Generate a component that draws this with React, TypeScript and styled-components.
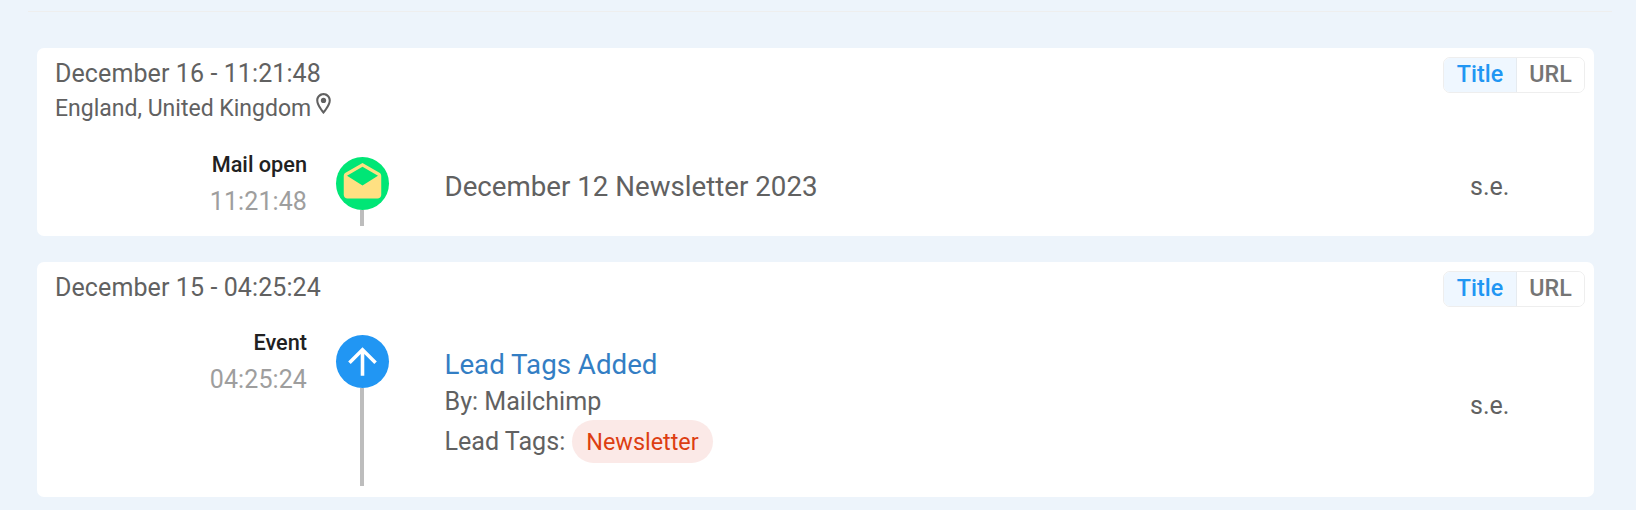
import React from 'react';
import styled, { createGlobalStyle } from 'styled-components';
import { MdArrowUpward, MdDrafts, MdOutlineLocationOn } from 'react-icons/md';

const GlobalStyle = createGlobalStyle`
  * { box-sizing: border-box; }
  body {
    margin: 0;
    background: #edf4fb;
    font-family: Roboto, 'Liberation Sans', sans-serif;
    color: #616161;
  }
`;

const Page = styled.main`
  height: 510px;
  padding: 11px 24px 0 28px;
  overflow: hidden;
`;

const Rule = styled.hr`
  height: 1px;
  margin: 0;
  border: 0;
  background: #eeeeee;
`;

const Feed = styled.div`
  display: flex;
  flex-direction: column;
  gap: 26px;
  padding: 36px 18px 0 9px;
`;

const Card = styled.section`
  padding-bottom: 10px;
  border-radius: 7px;
  background: #ffffff;

  &:last-child {
    padding-bottom: 11px;
  }
`;

const CardHeader = styled.header`
  display: flex;
  justify-content: space-between;
  align-items: flex-start;
  padding: 9px 9px 32px 18px;
`;

const Session = styled.div`
  padding-top: 2px;
`;

const DateLine = styled.div`
  font-size: 25px;
  letter-spacing: 0.1px;
  line-height: 30px;
`;

const Place = styled.div`
  display: flex;
  height: 36px;
  padding-top: 2px;
  font-size: 23px;
  line-height: 36px;
`;

const Pin = styled(MdOutlineLocationOn)`
  width: 25px;
  height: 25px;
`;

const Toggle = styled.div`
  display: flex;
  height: 36px;
  margin-bottom: -4px;
  border: 1px solid #eeeeee;
  border-radius: 7px;
  overflow: hidden;
`;

const ToggleButton = styled.button<{ $active?: boolean }>`
  width: ${(p) => (p.$active ? 73 : 67)}px;
  padding: 0 0 2px;
  border: 0;
  border-right: ${(p) => (p.$active ? '1px solid #e6ebf0' : '0')};
  background: ${(p) => (p.$active ? '#eff7ff' : '#ffffff')};
  color: ${(p) => (p.$active ? '#2196f3' : '#757575')};
  font: 500 23.3px/32px Roboto, sans-serif;
`;

const Row = styled.div<{ $height: number }>`
  display: grid;
  grid-template-columns: 270px 29px 53px 55.5px 1fr 124px;
  height: ${(p) => p.$height}px;
`;

const Label = styled.div`
  margin-top: -4px;
  text-align: right;
`;

const Kind = styled.div`
  color: #212121;
  font-size: 21.7px;
  font-weight: 500;
  line-height: 24px;
`;

const Time = styled.div`
  margin-top: 7px;
  color: #9e9e9e;
  font-size: 25px;
  letter-spacing: 0.1px;
  line-height: 36px;
`;

const Rail = styled.div`
  grid-column: 3;
  display: flex;
  flex-direction: column;
`;

const Bubble = styled.div<{ $bg: string; $fg: string }>`
  display: flex;
  align-items: center;
  justify-content: center;
  width: 53px;
  height: 53px;
  border-radius: 50%;
  background: ${(p) => p.$bg};
  color: ${(p) => p.$fg};
`;

const Stem = styled.div`
  flex: 1;
  width: 4px;
  margin-left: 24px;
  background: #bdbdbd;
`;

const Body = styled.div`
  grid-column: 5;
  padding-top: 12px;
`;

const Heading = styled.div<{ $link?: boolean }>`
  color: ${(p) => (p.$link ? '#337ec4' : 'inherit')};
  font-size: 27.7px;
  line-height: 36px;
`;

const Detail = styled.div`
  display: flex;
  align-items: center;
  gap: 7px;
  font-size: 25.1px;
  line-height: 37px;
`;

const Tag = styled.span`
  height: 43px;
  padding: 0 14px;
  border-radius: 22px;
  background: #fbe9e7;
  color: #dd3e12;
  font-size: 23.4px;
  line-height: 44px;
`;

const Duration = styled.div`
  display: flex;
  align-items: center;
  padding-bottom: 10px;
  font-size: 25px;
`;

type EntryProps = {
  date: string;
  place?: string;
  kind: string;
  time: string;
  height: number;
  bubble: { bg: string; fg: string; icon: React.ReactNode };
  children: React.ReactNode;
};

function Entry({ date, place, kind, time, height, bubble, children }: EntryProps) {
  return (
    <Card>
      <CardHeader>
        <Session>
          <DateLine>{date}</DateLine>
          {place && (
            <Place>
              <span>{place}</span>
              <Pin />
            </Place>
          )}
        </Session>
        <Toggle>
          <ToggleButton $active>Title</ToggleButton>
          <ToggleButton>URL</ToggleButton>
        </Toggle>
      </CardHeader>
      <Row $height={height}>
        <Label>
          <Kind>{kind}</Kind>
          <Time>{time}</Time>
        </Label>
        <Rail>
          <Bubble $bg={bubble.bg} $fg={bubble.fg}>
            {bubble.icon}
          </Bubble>
          <Stem />
        </Rail>
        <Body>{children}</Body>
        <Duration>s.e.</Duration>
      </Row>
    </Card>
  );
}

export default function App() {
  return (
    <>
      <GlobalStyle />
      <Page>
        <Rule />
        <Feed>
          <Entry
            date="December 16 - 11:21:48"
            place="England, United Kingdom"
            kind="Mail open"
            time="11:21:48"
            height={69}
            bubble={{ bg: '#00e676', fg: '#ffe082', icon: <MdDrafts size={45} /> }}
          >
            <Heading>December 12 Newsletter 2023</Heading>
          </Entry>
          <Entry
            date="December 15 - 04:25:24"
            kind="Event"
            time="04:25:24"
            height={151}
            bubble={{ bg: '#2196f3', fg: '#ffffff', icon: <MdArrowUpward size={43} /> }}
          >
            <Heading $link>Lead Tags Added</Heading>
            <Detail>By: Mailchimp</Detail>
            <Detail>
              Lead Tags: <Tag>Newsletter</Tag>
            </Detail>
          </Entry>
        </Feed>
      </Page>
    </>
  );
}
